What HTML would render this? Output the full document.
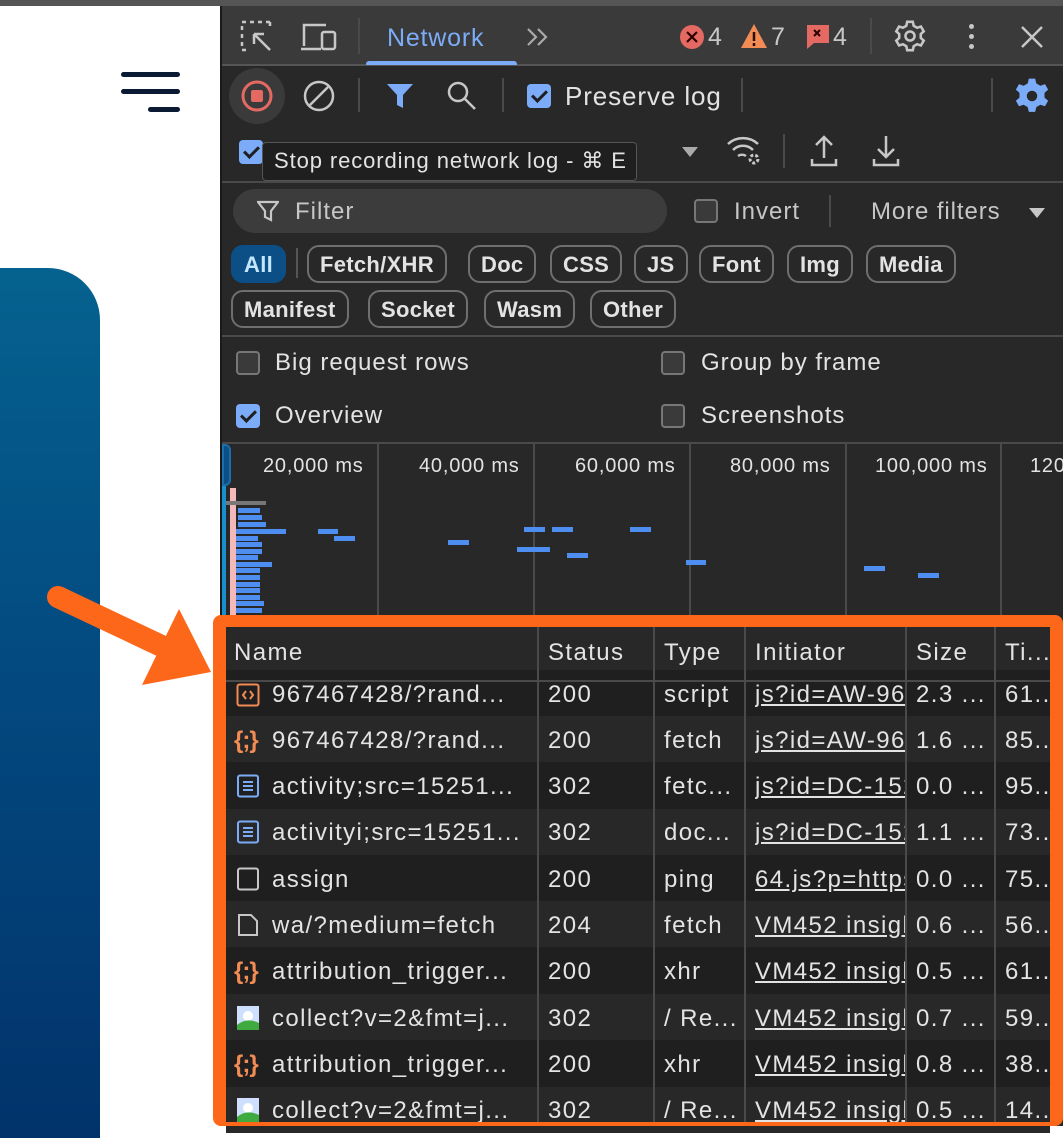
<!DOCTYPE html>
<html><head><meta charset="utf-8"><style>
*{margin:0;padding:0;box-sizing:border-box}
body{width:1063px;height:1126px;overflow:hidden;position:relative;background:#fff;font-family:"Liberation Sans",sans-serif;color:#e3e3e3}
.a{position:absolute}
.t{position:absolute;font-size:24px;white-space:nowrap;line-height:1;letter-spacing:0.6px}
.tb .t{letter-spacing:1.4px}
.sep{position:absolute;width:2px;background:#4a4a4a}
.hl{position:absolute;height:2px;background:#4a4a4a;left:222px;right:0}
.chip{position:absolute;height:38px;border:2px solid #6f6f6f;border-radius:12px;font-size:22px;font-weight:bold;color:#e3e3e3;padding:7px 11px;line-height:1;letter-spacing:0.3px}
.cb{position:absolute;width:24px;height:24px;border:2px solid #777;border-radius:4px;background:#3a3a3a}
.cbon{position:absolute;width:24px;height:24px;border-radius:4px;background:#7cacf8}
.cbon:after{content:"";position:absolute;left:8px;top:3px;width:6px;height:12px;border:solid #1f1f1f;border-width:0 3px 3px 0;transform:rotate(45deg)}
.bar{position:absolute;height:5px;background:#4d8ef0}
.row{position:absolute;left:226px;width:824px;height:46.4px}
.u{text-decoration:underline}
.col{position:absolute;width:2px;background:#4a4a4a;top:627px;bottom:0}
.js{position:absolute;color:#f28b54;font-size:24px;font-weight:bold;letter-spacing:-1px;line-height:1}
.tl{font-size:20px!important;letter-spacing:0.8px!important}
</style></head><body>
<div class="a" style="left:0;top:0;width:1063px;height:6px;background:#555"></div>
<div class="a" style="left:121px;top:72px;width:59px;height:5px;border-radius:3px;background:#0a1a33"></div>
<div class="a" style="left:121px;top:89px;width:59px;height:5px;border-radius:3px;background:#0a1a33"></div>
<div class="a" style="left:148px;top:107px;width:32px;height:5px;border-radius:3px;background:#0a1a33"></div>
<div class="a" style="left:0;top:268px;width:100px;height:870px;border-top-right-radius:52px;background:linear-gradient(180deg,#05628f 0%,#034a80 45%,#01336a 100%)"></div>

<div class="a" style="left:220px;top:6px;width:843px;height:1120px;background:#282828;border-left:2px solid #1a1a1a"></div>
<div class="a" style="left:222px;top:6px;width:841px;height:59px;background:#3a3a3a"></div>
<div class="hl" style="top:64px;background:#555"></div>
<svg class="a" style="left:240px;top:20px" width="36" height="34" viewBox="0 0 36 34" fill="none" stroke="#c7c7c7" stroke-width="2.5"><path d="M2 2h4M10 2h4M18 2h4M26 2h4M30 2v4M2 6v4M2 14v4M2 22v4M2 30h4" /><path d="M14 14l16 16M14 14h10M14 14v10"/></svg>
<svg class="a" style="left:300px;top:22px" width="38" height="30" viewBox="0 0 38 30" fill="none" stroke="#c7c7c7" stroke-width="2.5"><path d="M4 24V3h22M1 27h20"/><rect x="22" y="10" width="13" height="17" rx="2"/></svg>
<div class="sep" style="left:358px;top:18px;height:36px"></div>
<div class="t" style="left:387px;top:26px;color:#7cacf8;font-size:25px;letter-spacing:0.8px">Network</div>
<div class="a" style="left:366px;top:61px;width:151px;height:4px;background:#7cacf8;border-radius:3px 3px 0 0"></div>
<svg class="a" style="left:526px;top:27px" width="26" height="20" fill="none" stroke="#aaa" stroke-width="2.2"><path d="M2 2l8 8-8 8M12 2l8 8-8 8"/></svg>
<svg class="a" style="left:679px;top:24px" width="26" height="26"><circle cx="13" cy="13" r="12" fill="#e46962"/><path d="M8 8l10 10M18 8L8 18" stroke="#2b0000" stroke-width="2.2"/></svg>
<div class="t" style="left:708px;top:25px;font-size:25px;color:#c7c7c7">4</div>
<svg class="a" style="left:740px;top:23px" width="28" height="26"><path d="M14 1L27 25H1z" fill="#f28b54"/><path d="M14 9v9M14 20v3" stroke="#2b1000" stroke-width="2.5"/></svg>
<div class="t" style="left:771px;top:25px;font-size:25px;color:#c7c7c7">7</div>
<svg class="a" style="left:805px;top:23px" width="26" height="28"><path d="M2 2h22v18H9l-7 6z" fill="#e46962"/><path d="M9 7l6 6M15 7l-6 6" stroke="#2b0000" stroke-width="2"/></svg>
<div class="t" style="left:833px;top:25px;font-size:25px;color:#c7c7c7">4</div>
<div class="sep" style="left:870px;top:18px;height:36px"></div>
<svg class="a" style="left:893px;top:19px" width="34" height="34" viewBox="0 0 24 24" fill="none" stroke="#c7c7c7" stroke-width="1.8"><circle cx="12" cy="12" r="3.2"/><path d="M10 2h4l.6 2.8 2.4 1.4 2.7-.9 2 3.4-2.1 1.9v2.8l2.1 1.9-2 3.4-2.7-.9-2.4 1.4L14 22h-4l-.6-2.8-2.4-1.4-2.7.9-2-3.4 2.1-1.9v-2.8L2.3 8.7l2-3.4 2.7.9 2.4-1.4z"/></svg>
<div class="a" style="left:969px;top:24px;width:5px;height:5px;border-radius:3px;background:#c7c7c7"></div>
<div class="a" style="left:969px;top:34px;width:5px;height:5px;border-radius:3px;background:#c7c7c7"></div>
<div class="a" style="left:969px;top:44px;width:5px;height:5px;border-radius:3px;background:#c7c7c7"></div>
<svg class="a" style="left:1020px;top:25px" width="24" height="24"><path d="M2 2l20 20M22 2L2 22" stroke="#c7c7c7" stroke-width="2.5"/></svg>

<div class="a" style="left:229px;top:68px;width:56px;height:56px;border-radius:28px;background:#3a3a3a"></div>
<svg class="a" style="left:239px;top:78px" width="36" height="36"><circle cx="18" cy="18" r="14" fill="none" stroke="#e46962" stroke-width="3"/><rect x="12" y="12" width="12" height="12" rx="2" fill="#e46962"/></svg>
<svg class="a" style="left:302px;top:79px" width="34" height="34"><circle cx="17" cy="17" r="14" fill="none" stroke="#c7c7c7" stroke-width="2.5"/><path d="M8 26L26 8" stroke="#c7c7c7" stroke-width="2.5"/></svg>
<div class="sep" style="left:358px;top:78px;height:34px"></div>
<svg class="a" style="left:386px;top:82px" width="28" height="28"><path d="M1 2h26L17 13v13l-6-3V13z" fill="#7cacf8"/></svg>
<svg class="a" style="left:446px;top:80px" width="32" height="32" fill="none" stroke="#c7c7c7" stroke-width="2.5"><circle cx="12" cy="12" r="9"/><path d="M19 19l10 10"/></svg>
<div class="sep" style="left:502px;top:78px;height:34px"></div>
<div class="cbon" style="left:527px;top:84px"></div>
<div class="t" style="left:565px;top:83px;font-size:26px;letter-spacing:0.9px">Preserve log</div>
<div class="sep" style="left:741px;top:78px;height:34px"></div>
<div class="sep" style="left:991px;top:78px;height:34px"></div>
<svg class="a" style="left:1013px;top:77px" width="38" height="38" viewBox="0 0 24 24"><path fill="#7cacf8" d="M10 1h4l.7 3 2.6 1.5 2.9-1 2 3.5-2.3 2v3l2.3 2-2 3.5-2.9-1-2.6 1.5-.7 3h-4l-.7-3-2.6-1.5-2.9 1-2-3.5 2.3-2v-3L1.8 8l2-3.5 2.9 1L9.3 4z"/><circle cx="12" cy="12" r="3.3" fill="#282828"/></svg>
<div class="cbon" style="left:239px;top:140px"></div>
<svg class="a" style="left:680px;top:145px" width="20" height="14"><path d="M2 2h16L10 12z" fill="#aaa"/></svg>
<svg class="a" style="left:726px;top:134px" width="38" height="34" fill="none" stroke="#c7c7c7" stroke-width="2.5"><path d="M2 10a22 22 0 0 1 30 0M7 16a14 14 0 0 1 20 0M12 22a7 7 0 0 1 8 0"/><circle cx="28" cy="25" r="4" stroke-width="3" stroke-dasharray="3 2"/></svg>
<div class="sep" style="left:783px;top:134px;height:34px"></div>
<svg class="a" style="left:810px;top:134px" width="28" height="34" fill="none" stroke="#c7c7c7" stroke-width="2.5"><path d="M14 24V3M6 11l8-8 8 8M2 25v6h24v-6"/></svg>
<svg class="a" style="left:872px;top:134px" width="28" height="34" fill="none" stroke="#c7c7c7" stroke-width="2.5"><path d="M14 2v21M6 15l8 8 8-8M2 25v6h24v-6"/></svg>
<div class="a" style="left:262px;top:142px;width:375px;height:39px;background:#1f1f1f;border:1px solid #555;border-radius:4px"></div>
<div class="t" style="left:274px;top:150px;font-size:22px;letter-spacing:0.9px">Stop recording network log - &#8984; E</div>
<div class="hl" style="top:181px"></div>
<div class="a" style="left:233px;top:189px;width:434px;height:44px;border-radius:22px;background:#3c3c3c"></div>
<svg class="a" style="left:257px;top:200px" width="22" height="22" fill="none" stroke="#c7c7c7" stroke-width="2.2"><path d="M1 2h20l-7 9v9l-6-3v-6z"/></svg>
<div class="t" style="left:295px;top:200px;color:#c7c7c7;letter-spacing:1px">Filter</div>
<div class="cb" style="left:694px;top:199px"></div>
<div class="t" style="left:734px;top:200px;color:#c7c7c7;letter-spacing:1px">Invert</div>
<div class="sep" style="left:829px;top:195px;height:32px"></div>
<div class="t" style="left:871px;top:200px;color:#c7c7c7;letter-spacing:0.9px">More filters</div>
<svg class="a" style="left:1027px;top:206px" width="20" height="14"><path d="M2 2h16L10 12z" fill="#c7c7c7"/></svg>
<div class="chip" style="left:231px;top:245px;border-color:#0b4f86;background:#0b4f86;color:#c2e7ff">All</div>
<div class="sep" style="left:296px;top:248px;height:30px;background:#555"></div>
<div class="chip" style="left:307px;top:245px">Fetch/XHR</div>
<div class="chip" style="left:468px;top:245px">Doc</div>
<div class="chip" style="left:550px;top:245px">CSS</div>
<div class="chip" style="left:634px;top:245px">JS</div>
<div class="chip" style="left:699px;top:245px">Font</div>
<div class="chip" style="left:787px;top:245px">Img</div>
<div class="chip" style="left:866px;top:245px">Media</div>
<div class="chip" style="left:231px;top:290px">Manifest</div>
<div class="chip" style="left:368px;top:290px">Socket</div>
<div class="chip" style="left:484px;top:290px">Wasm</div>
<div class="chip" style="left:590px;top:290px">Other</div>
<div class="hl" style="top:335px"></div>
<div class="cb" style="left:236px;top:351px"></div>
<div class="t" style="left:275px;top:351px;letter-spacing:1px">Big request rows</div>
<div class="cb" style="left:661px;top:351px"></div>
<div class="t" style="left:701px;top:351px;letter-spacing:1px">Group by frame</div>
<div class="cbon" style="left:236px;top:404px"></div>
<div class="t" style="left:275px;top:404px;letter-spacing:1px">Overview</div>
<div class="cb" style="left:661px;top:404px"></div>
<div class="t" style="left:701px;top:404px;letter-spacing:1px">Screenshots</div>
<div class="hl" style="top:442px"></div>
<div class="a" style="left:377px;top:444px;width:2px;height:175px;background:#4a4a4a"></div>
<div class="a" style="left:533px;top:444px;width:2px;height:175px;background:#4a4a4a"></div>
<div class="a" style="left:689px;top:444px;width:2px;height:175px;background:#4a4a4a"></div>
<div class="a" style="left:845px;top:444px;width:2px;height:175px;background:#4a4a4a"></div>
<div class="a" style="left:1000px;top:444px;width:2px;height:175px;background:#4a4a4a"></div>
<div class="t tl" style="left:263px;top:456px">20,000 ms</div>
<div class="t tl" style="left:419px;top:456px">40,000 ms</div>
<div class="t tl" style="left:575px;top:456px">60,000 ms</div>
<div class="t tl" style="left:730px;top:456px">80,000 ms</div>
<div class="t tl" style="left:875px;top:456px">100,000 ms</div>
<div class="t tl" style="left:1030px;top:456px">120</div>
<div class="a" style="left:222px;top:444px;width:9px;height:42px;border:2px solid #1a6fa8;border-radius:0 6px 6px 0;background:#0b4f86"></div>
<div class="a" style="left:222px;top:486px;width:4px;height:135px;background:#1a8fd0"></div>
<div class="a" style="left:230px;top:488px;width:6px;height:130px;background:#f4b8b8"></div>
<div class="a" style="left:226px;top:501px;width:40px;height:4px;background:#777"></div>
<div class="bar" style="left:238px;top:508px;width:22px"></div>
<div class="bar" style="left:238px;top:515px;width:24px"></div>
<div class="bar" style="left:238px;top:522px;width:28px"></div>
<div class="bar" style="left:236px;top:529px;width:50px"></div>
<div class="bar" style="left:318px;top:529px;width:20px"></div>
<div class="bar" style="left:334px;top:536px;width:21px"></div>
<div class="bar" style="left:236px;top:536px;width:22px"></div>
<div class="bar" style="left:236px;top:542px;width:26px"></div>
<div class="bar" style="left:236px;top:549px;width:26px"></div>
<div class="bar" style="left:236px;top:555px;width:22px"></div>
<div class="bar" style="left:236px;top:562px;width:36px"></div>
<div class="bar" style="left:236px;top:568px;width:24px"></div>
<div class="bar" style="left:236px;top:575px;width:24px"></div>
<div class="bar" style="left:236px;top:582px;width:24px"></div>
<div class="bar" style="left:236px;top:588px;width:24px"></div>
<div class="bar" style="left:236px;top:595px;width:24px"></div>
<div class="bar" style="left:236px;top:601px;width:28px"></div>
<div class="bar" style="left:236px;top:608px;width:26px"></div>
<div class="bar" style="left:448px;top:540px;width:21px"></div>
<div class="bar" style="left:524px;top:527px;width:21px"></div>
<div class="bar" style="left:552px;top:527px;width:21px"></div>
<div class="bar" style="left:517px;top:547px;width:33px"></div>
<div class="bar" style="left:567px;top:553px;width:21px"></div>
<div class="bar" style="left:630px;top:527px;width:21px"></div>
<div class="bar" style="left:686px;top:560px;width:20px"></div>
<div class="bar" style="left:864px;top:566px;width:21px"></div>
<div class="bar" style="left:918px;top:573px;width:21px"></div>

<div class="a" style="left:226px;top:627px;width:824px;height:499px;background:#1f1f1f"></div>
<div class="a" style="left:226px;top:627px;width:824px;height:53px;background:#282828;border-bottom:2px solid #4a4a4a"></div>

<div class="row" style="top:670px;background:#1f1f1f"></div>
<div class="row" style="top:716px;background:#282828"></div>
<div class="row" style="top:762px;background:#1f1f1f"></div>
<div class="row" style="top:809px;background:#282828"></div>
<div class="row" style="top:855px;background:#1f1f1f"></div>
<div class="row" style="top:901px;background:#282828"></div>
<div class="row" style="top:948px;background:#1f1f1f"></div>
<div class="row" style="top:994px;background:#282828"></div>
<div class="row" style="top:1040px;background:#1f1f1f"></div>
<div class="row" style="top:1087px;background:#282828"></div>
<div class="a" style="left:226px;top:680px;width:824px;height:2px;background:#4a4a4a"></div>

<div class="col" style="left:537px"></div>
<div class="col" style="left:653px"></div>
<div class="col" style="left:744px"></div>
<div class="col" style="left:905px"></div>
<div class="col" style="left:994px"></div>

<svg class="a" style="left:236px;top:683px" width="24" height="24"><rect x="1.5" y="1.5" width="21" height="21" rx="2" fill="none" stroke="#f28b54" stroke-width="2"/><path d="M10 8l-3 4 3 4M14 8l3 4-3 4" stroke="#f28b54" stroke-width="2" fill="none"/></svg>
<div class="js" style="left:234px;top:729px">{;}</div>
<svg class="a" style="left:236px;top:774px" width="24" height="24"><rect x="2" y="1.5" width="20" height="21" rx="2" fill="none" stroke="#7cacf8" stroke-width="2"/><path d="M7 8h10M7 12h10M7 16h10" stroke="#7cacf8" stroke-width="2"/></svg>
<svg class="a" style="left:236px;top:820px" width="24" height="24"><rect x="2" y="1.5" width="20" height="21" rx="2" fill="none" stroke="#7cacf8" stroke-width="2"/><path d="M7 8h10M7 12h10M7 16h10" stroke="#7cacf8" stroke-width="2"/></svg>
<svg class="a" style="left:236px;top:867px" width="24" height="24"><rect x="2" y="1.5" width="20" height="21" rx="2" fill="none" stroke="#c7c7c7" stroke-width="2"/></svg>
<svg class="a" style="left:236px;top:913px" width="24" height="24"><path d="M3 2h12l6 6v14H3z" fill="none" stroke="#c7c7c7" stroke-width="2"/></svg>
<div class="js" style="left:234px;top:960px">{;}</div>
<svg class="a" style="left:237px;top:1006px" width="22" height="24"><rect x="0" y="0" width="22" height="24" fill="#cfe0ff"/><circle cx="11" cy="10" r="5" fill="#fff"/><path d="M0 24v-5q10-8 22-2v7z" fill="#3faa3f"/></svg>
<div class="js" style="left:234px;top:1053px">{;}</div>
<svg class="a" style="left:237px;top:1098px" width="22" height="24"><rect x="0" y="0" width="22" height="24" fill="#cfe0ff"/><circle cx="11" cy="10" r="5" fill="#fff"/><path d="M0 24v-5q10-8 22-2v7z" fill="#3faa3f"/></svg>

<div class="tb">
<div class="t" style="left:234px;top:641px">Name</div>
<div class="t" style="left:548px;top:641px">Status</div>
<div class="t" style="left:664px;top:641px">Type</div>
<div class="t" style="left:755px;top:641px">Initiator</div>
<div class="t" style="left:916px;top:641px">Size</div>
<div class="t" style="left:1005px;top:641px">Ti...</div>

<div class="t" style="left:272px;top:683px">967467428/?rand...</div>
<div class="t" style="left:272px;top:729px">967467428/?rand...</div>
<div class="t" style="left:272px;top:775px">activity;src=15251...</div>
<div class="t" style="left:272px;top:821px">activityi;src=15251...</div>
<div class="t" style="left:272px;top:868px">assign</div>
<div class="t" style="left:272px;top:914px">wa/?medium=fetch</div>
<div class="t" style="left:272px;top:960px">attribution_trigger...</div>
<div class="t" style="left:272px;top:1007px">collect?v=2&amp;fmt=j...</div>
<div class="t" style="left:272px;top:1053px">attribution_trigger...</div>
<div class="t" style="left:272px;top:1099px">collect?v=2&amp;fmt=j...</div>

<div class="t" style="left:548px;top:683px">200</div>
<div class="t" style="left:548px;top:729px">200</div>
<div class="t" style="left:548px;top:775px">302</div>
<div class="t" style="left:548px;top:821px">302</div>
<div class="t" style="left:548px;top:868px">200</div>
<div class="t" style="left:548px;top:914px">204</div>
<div class="t" style="left:548px;top:960px">200</div>
<div class="t" style="left:548px;top:1007px">302</div>
<div class="t" style="left:548px;top:1053px">200</div>
<div class="t" style="left:548px;top:1099px">302</div>

<div class="t" style="left:664px;top:683px">script</div>
<div class="t" style="left:664px;top:729px">fetch</div>
<div class="t" style="left:664px;top:775px">fetc...</div>
<div class="t" style="left:664px;top:821px">doc...</div>
<div class="t" style="left:664px;top:868px">ping</div>
<div class="t" style="left:664px;top:914px">fetch</div>
<div class="t" style="left:664px;top:960px">xhr</div>
<div class="t" style="left:664px;top:1007px">/ Re...</div>
<div class="t" style="left:664px;top:1053px">xhr</div>
<div class="t" style="left:664px;top:1099px">/ Re...</div>

<div class="a" style="left:755px;top:670px;width:150px;height:456px;overflow:hidden">
<div class="t u" style="left:0;top:13px">js?id=AW-967</div>
<div class="t u" style="left:0;top:59px">js?id=AW-967</div>
<div class="t u" style="left:0;top:105px">js?id=DC-152</div>
<div class="t u" style="left:0;top:151px">js?id=DC-152</div>
<div class="t u" style="left:0;top:198px">64.js?p=https</div>
<div class="t u" style="left:0;top:244px">VM452 insigh</div>
<div class="t u" style="left:0;top:290px">VM452 insigh</div>
<div class="t u" style="left:0;top:337px">VM452 insigh</div>
<div class="t u" style="left:0;top:383px">VM452 insigh</div>
<div class="t u" style="left:0;top:429px">VM452 insigh</div>
</div>

<div class="t" style="left:916px;top:683px">2.3 ...</div>
<div class="t" style="left:916px;top:729px">1.6 ...</div>
<div class="t" style="left:916px;top:775px">0.0 ...</div>
<div class="t" style="left:916px;top:821px">1.1 ...</div>
<div class="t" style="left:916px;top:868px">0.0 ...</div>
<div class="t" style="left:916px;top:914px">0.6 ...</div>
<div class="t" style="left:916px;top:960px">0.5 ...</div>
<div class="t" style="left:916px;top:1007px">0.7 ...</div>
<div class="t" style="left:916px;top:1053px">0.8 ...</div>
<div class="t" style="left:916px;top:1099px">0.5 ...</div>

<div class="t" style="left:1005px;top:683px">61...</div>
<div class="t" style="left:1005px;top:729px">85...</div>
<div class="t" style="left:1005px;top:775px">95...</div>
<div class="t" style="left:1005px;top:821px">73...</div>
<div class="t" style="left:1005px;top:868px">75...</div>
<div class="t" style="left:1005px;top:914px">56...</div>
<div class="t" style="left:1005px;top:960px">61...</div>
<div class="t" style="left:1005px;top:1007px">59...</div>
<div class="t" style="left:1005px;top:1053px">38...</div>
<div class="t" style="left:1005px;top:1099px">14...</div>
</div>

<div class="a" style="left:213px;top:615px;width:850px;height:511px;border:13px solid #fd6719;border-width:12px 13px 4px 13px;border-radius:8px"></div>
<svg class="a" style="left:0;top:0" width="260" height="720"><path d="M58 597L170 650" stroke="#fd6719" stroke-width="22" stroke-linecap="round"/><path d="M179 609L211 672L142 685z" fill="#fd6719"/></svg>
</body></html>
